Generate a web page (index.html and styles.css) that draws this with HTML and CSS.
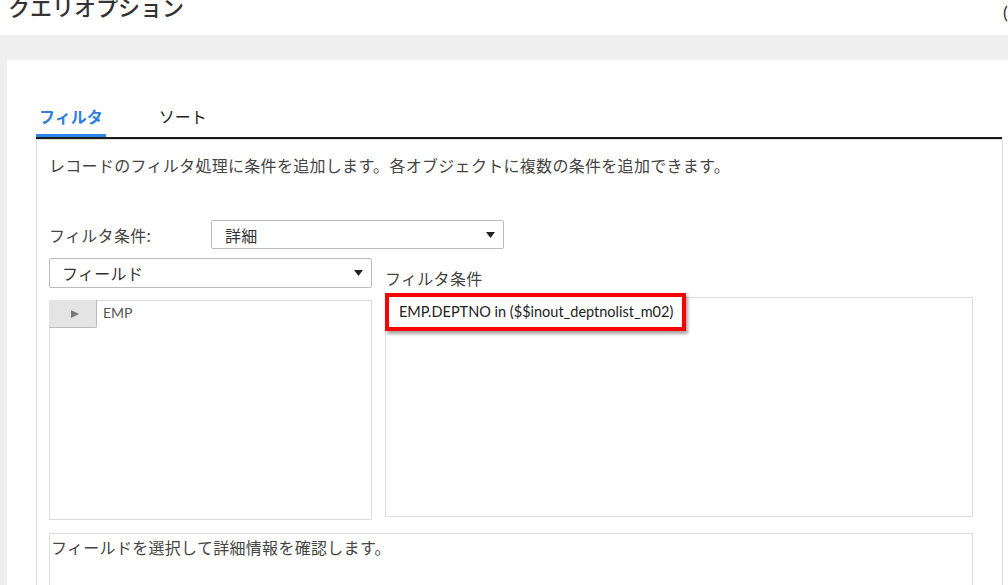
FILE: index.html
```html
<!DOCTYPE html>
<html lang="ja">
<head>
    <meta charset="UTF-8">
    <title>クエリオプション</title>
    <link rel="stylesheet" href="styles.css">
</head>
<body>
    <div class="header">
        <h1 class="title">クエリオプション</h1>
        <span class="help">(</span>
    </div>
    <div class="band"></div>
    <div class="page">
        <div class="panel">
            <div class="tabs">
                <div class="tab active">フィルタ</div>
                <div class="tab">ソート</div>
            </div>
            <div class="tab-body">
                <p class="desc">レコードのフィルタ処理に条件を追加します。各オブジェクトに複数の条件を追加できます。</p>

                <div class="filter-row">
                    <label class="filter-label">フィルタ条件:</label>
                    <div class="select select-type">
                        <span>詳細</span>
                        <svg class="caret" width="9" height="6" viewBox="0 0 9 6"><path d="M0 0h9L4.5 6z" fill="#222"/></svg>
                    </div>
                </div>

                <div class="columns">
                    <div class="col-left">
                        <div class="select select-field">
                            <span>フィールド</span>
                            <svg class="caret" width="9" height="6" viewBox="0 0 9 6"><path d="M0 0h9L4.5 6z" fill="#222"/></svg>
                        </div>
                        <div class="field-list">
                            <div class="field-item">
                                <button class="expand">
                                    <svg width="10" height="10" viewBox="0 0 10 10"><path d="M1 1l8 4-8 4z" fill="#777"/></svg>
                                </button>
                                <span class="field-name">EMP</span>
                            </div>
                        </div>
                    </div>
                    <div class="col-right">
                        <div class="cond-label">フィルタ条件</div>
                        <div class="cond-box">
                            <span class="expr">EMP.DEPTNO in ($$inout_deptnolist_m02)</span>
                        </div>
                    </div>
                </div>

                <div class="details">フィールドを選択して詳細情報を確認します。</div>
            </div>
        </div>
    </div>
</body>
</html>
```

FILE: styles.css
```css
body {
    margin: 0;
    padding: 0;
    background: #FFFFFF;
    color: #444444;
    font-family: 'Lato', 'Noto Sans CJK JP', sans-serif;
    font-size: 16px;
    overflow: hidden;
}

.header {
    display: flex;
    justify-content: space-between;
    height: 35px;
    padding-left: 8px;
}

.title {
    margin: -5px 0 0;
    font-size: 22px;
    line-height: 22px;
    font-weight: 500;
    color: #333333;
    font-family: 'Noto Sans CJK JP', sans-serif;
}

.help {
    margin: 2px -5px 0 0;
    font-size: 18px;
    line-height: 20px;
    width: 10px;
    color: #333333;
}

.band {
    height: 25px;
    background: #EFEFEF;
}

.page {
    background: #EFEFEF;
    padding-left: 7px;
}

.panel {
    background: #FFFFFF;
    padding: 44px 5px 0 29px;
    height: 600px;
}

.tabs {
    display: flex;
    gap: 50px;
    border-bottom: 2px solid #1A1A1A;
    margin-right: 1px;
}

.tab {
    font-family: 'Noto Sans CJK JP', sans-serif;
    line-height: 24px;
    padding: 0 3px 6px;
    border-bottom: 3px solid transparent;
    color: #222222;
}

.tab.active {
    color: #2F7FE0;
    font-weight: bold;
    border-bottom-color: #2F86F0;
}

.tab-body {
    border: 1px solid #DDDDDD;
    border-bottom: none;
    padding: 13px 29px 0 12px;
    height: 500px;
    font-family: 'Noto Sans CJK JP', sans-serif;
    letter-spacing: 0.3px;
}

.desc {
    margin: 0;
    line-height: 24px;
}

.filter-row {
    display: flex;
    align-items: center;
    margin-top: 43px;
}

.filter-label {
    width: 162px;
}

.select {
    display: flex;
    align-items: center;
    justify-content: space-between;
    box-sizing: border-box;
    border: 1px solid #BBBBBB;
    border-radius: 2px;
    background: #FFFFFF;
    color: #333333;
}

.select-type {
    width: 293px;
    height: 29px;
    padding: 0 8px 0 13px;
}

.columns {
    display: flex;
    gap: 13px;
    margin-top: 9px;
}

.col-left {
    width: 323px;
}

.select-field {
    width: 323px;
    height: 30px;
    padding: 0 8px 0 12px;
}

.field-list {
    box-sizing: border-box;
    margin-top: 12px;
    height: 220px;
    border: 1px solid #DDDDDD;
}

.field-item {
    display: flex;
    align-items: center;
    gap: 6px;
    margin: -1px 0 0 -1px;
}

.expand {
    width: 48px;
    height: 28px;
    padding: 0 0 0 4px;
    background: #E4E4E4;
    border: none;
    border-right: 1px solid #BBBBBB;
    border-bottom: 1px solid #BBBBBB;
    border-radius: 0 0 2px 0;
    display: flex;
    align-items: center;
    justify-content: center;
}

.field-name {
    font-family: 'Lato', sans-serif;
    font-size: 14px;
    letter-spacing: 0;
    color: #555555;
    margin-top: -4px;
}

.col-right {
    flex: 1;
}

.cond-label {
    margin-top: 8px;
    line-height: 24px;
}

.cond-box {
    box-sizing: border-box;
    margin-top: 7px;
    height: 220px;
    border: 1px solid #DDDDDD;
}

/* red annotation frame round the condition */
.expr {
    display: inline-block;
    box-sizing: border-box;
    width: 301px;
    height: 38px;
    margin: -10px 0 0 -1px;
    padding: 5px 0 0 10px;
    border: 4px solid #FF0000;
    background: #FFFFFF;
    box-shadow: 2px 3px 3px rgba(0, 0, 0, 0.35);
    font-family: 'Lato', sans-serif;
    font-size: 14.5px;
    letter-spacing: 0;
    line-height: 20px;
    color: #222222;
    white-space: nowrap;
}

.details {
    box-sizing: border-box;
    margin-top: 13px;
    height: 80px;
    padding: 1px 1px 0;
    border: 1px solid #DDDDDD;
    line-height: 24px;
}
```
